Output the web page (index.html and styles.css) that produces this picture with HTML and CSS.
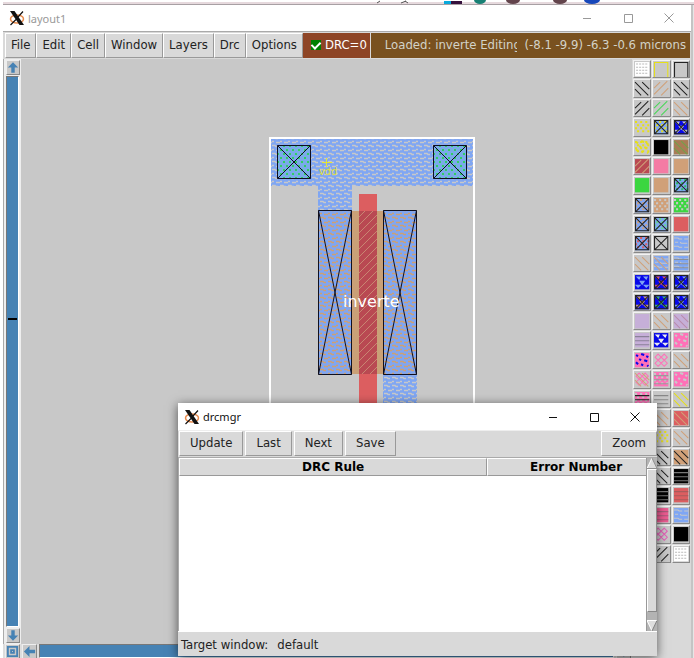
FILE: index.html
```html
<!DOCTYPE html>
<html lang="en">
<head>
<meta charset="utf-8">
<title>layout1</title>
<link rel="stylesheet" href="styles.css">
</head>
<body>
<svg class="defs" aria-hidden="true">
  <defs>
    <pattern id="wave" width="8" height="8" patternUnits="userSpaceOnUse"><path d="M0 1.500h3l1 1h2M4 6.500h4M0 5.500h2" stroke="#c8c8c8" stroke-width="1.300" fill="none"/></pattern>
    <pattern id="waveTan" width="8" height="8" patternUnits="userSpaceOnUse"><path d="M0 1.500h3l1 1h2M4 6.500h4M0 5.500h2" stroke="#cfa070" stroke-width="1.300" fill="none"/></pattern>
    <pattern id="contact" width="6" height="8" patternUnits="userSpaceOnUse"><path d="M1 2h2M4 6h2" stroke="#2fcf62" stroke-width="2"/></pattern>
    <pattern id="gate" width="8" height="8" patternUnits="userSpaceOnUse"><path d="M-1 9L9 -1M-1 1L1 -1M7 9L9 7" stroke="#c98672" fill="none"/></pattern>
    <symbol id="xlogo" viewBox="0 0 16 16">
      <ellipse cx="8" cy="9" rx="6.500" ry="4" fill="none" stroke="#e88a4c" stroke-width="1.500"/>
      <path d="M14 1.500L9 7M7 9.500L1.500 15" stroke="#111" stroke-width="1.200"/>
      <path d="M1 1h4.500L15 15h-4.500z" fill="#111"/>
    </symbol>
    <symbol id="arrow" viewBox="0 0 14 14"><path d="M7 1L13 7H9V13H5V7H1z" fill="#4682b4"/></symbol>
  </defs>
</svg>
<div class="desktop">
  <div class="behind" aria-hidden="true">
    <svg width="350" height="4"><path d="M33 3l3-2M57 3l5-2M61 1l3 2" stroke="#555"/><path d="M100 1h7v3h-7z" fill="#08a9dc"/><path d="M107 1h11v3h-11z" fill="#36103c"/><ellipse cx="136" cy="0" rx="6" ry="4" fill="#188074"/><ellipse cx="169" cy="0" rx="7" ry="4" fill="#63444c"/><ellipse cx="216" cy="0" rx="7" ry="4" fill="#63444c"/><ellipse cx="248" cy="0" rx="8" ry="4" fill="#1747ba"/></svg>
  </div>
  <section class="window main-window">
    <header class="titlebar inactive">
      <svg class="logo"><use href="#xlogo"/></svg><span class="title">layout1</span>
      <button class="caption" aria-label="Minimize"><svg viewBox="0 0 10 10"><path d="M1 5.500h8"/></svg></button>
      <button class="caption" aria-label="Maximize"><svg viewBox="0 0 10 10"><path d="M1.500 1.500h8v8h-8z"/></svg></button>
      <button class="caption" aria-label="Close"><svg viewBox="0 0 10 10"><path d="M.5.5l9 9M9.500.5l-9 9"/></svg></button>
    </header>
    <nav class="menubar">
      <button>File</button><button>Edit</button><button>Cell</button><button>Window</button><button>Layers</button><button>Drc</button><button>Options</button>
      <label class="drc"><input type="checkbox" checked>DRC=0</label>
      <div class="message"><span class="loaded">Loaded: inverte Editing</span><span class="coords">(-8.1 -9.9) -6.3 -0.6 microns</span></div>
    </nav>
    <div class="workspace">
      <div class="vscroll">
        <button aria-label="Scroll up"><svg><use href="#arrow"/></svg></button>
        <div class="trough"><i></i></div>
        <button aria-label="Scroll down"><svg class="down"><use href="#arrow"/></svg></button>
      </div>
      <svg class="canvas" role="img" aria-label="inverte cell layout">
        <g transform="translate(-21 -59)">
          <path d="M271 139h202v47H352v26h-34v-26h-47zM383 374h34v60h-34z" fill="#7fa6f3"/>
          <path d="M271 139h202v47H352v26h-34v-26h-47zM383 374h34v60h-34z" fill="url(#wave)"/>
          <path d="M351 211h33v163h-33z" fill="#c9a077"/>
          <path d="M359 194h18v240h-18z" fill="#dc5e60"/>
          <path d="M359 211h18v163h-18z" fill="#b94952"/>
          <path d="M359 211h18v163h-18z" fill="url(#gate)"/>
          <path d="M318 211h33v163h-33zM384 211h33v163h-33z" fill="#7fa6f3"/>
          <path d="M318 211h33v163h-33zM384 211h33v163h-33z" fill="url(#waveTan)"/>
          <path d="M278 146h33v32h-33zM433 146h33v32h-33z" fill="#79abe8"/>
          <path d="M278 146h33v32h-33zM433 146h33v32h-33z" fill="url(#contact)"/>
          <path class="ink" d="M277.500 145.500h33v33h-33zl33 33m0-33l-33 33M433.500 145.500h33v33h-33zl33 33m0-33l-33 33M318.500 210.500h33v164h-33zl33 164m0-164l-33 164M383.500 210.500h33v164h-33zl33 164m0-164l-33 164"/>
          <path d="M270 450V138h204v312" fill="none" stroke="#fff" stroke-width="2"/>
          <path d="M322 162.500h10M326.500 158v9" stroke="#e6e632"/>
          <text class="pin" x="319" y="175">vdd</text>
          <text class="cell-name" x="343" y="307">inverte</text>
        </g>
      </svg>
      <div class="palette" id="palette"></div>
      <div class="hscroll">
        <button aria-label="Fit view"><svg viewBox="0 0 14 14"><path d="M2 2h10v10H2zM5.500 5.500h3v3h-3z" fill="none" stroke="#4682b4" stroke-width="2"/></svg></button>
        <button aria-label="Scroll left"><svg class="left"><use href="#arrow"/></svg></button>
        <div class="trough"></div>
        <button aria-label="Scroll right"><svg class="right"><use href="#arrow"/></svg></button>
      </div>
    </div>
  </section>

  <section class="window dialog">
    <header class="titlebar">
      <svg class="logo"><use href="#xlogo"/></svg><span class="title">drcmgr</span>
      <button class="caption" aria-label="Minimize"><svg viewBox="0 0 10 10"><path d="M1 5.500h8"/></svg></button>
      <button class="caption" aria-label="Maximize"><svg viewBox="0 0 10 10"><path d="M1.500 1.500h8v8h-8z"/></svg></button>
      <button class="caption" aria-label="Close"><svg viewBox="0 0 10 10"><path d="M.5.5l9 9M9.500.5l-9 9"/></svg></button>
    </header>
    <div class="toolbar"><button>Update</button><button>Last</button><button>Next</button><button>Save</button><button class="zoom">Zoom</button></div>
    <div class="list">
      <div class="rows"><table><thead><tr><th class="rule">DRC Rule</th><th>Error Number</th></tr></thead></table></div>
      <div class="listbar">
        <button aria-label="Up"><svg viewBox="0 0 10 11"><path d="M5 0L10 10.500H0z" fill="#dedede"/><path d="M0 10.500L5 0" stroke="#fff"/><path d="M5 0L10 10.500H0" fill="none" stroke="#909090"/></svg></button>
        <div class="thumb"></div>
        <button aria-label="Down"><svg viewBox="0 0 10 11"><path d="M0 .5H10L5 11z" fill="#dedede"/><path d="M10 .5H0L5 11" fill="none" stroke="#fff"/><path d="M5 11L10 .5" stroke="#808080"/></svg></button>
      </div>
    </div>
    <footer class="status"><span>Target window:</span><span>default</span></footer>
  </section>
</div>
<script src="palette.js"></script>
</body>
</html>
```
FILE: styles.css
```css
* { box-sizing: border-box; }
body { margin: 0; background: #fff; color: #222; font: 13px "DejaVu Sans Condensed", "DejaVu Sans", sans-serif; }
button { font: inherit; color: inherit; margin: 0; padding: 0; white-space: nowrap; border-radius: 0; }
svg { display: block; }
.defs { position: absolute; width: 0; height: 0; }
.desktop { position: relative; height: 100vh; display: flex; flex-direction: column; padding-left: 3px; overflow: hidden; background: linear-gradient(90deg, #fff 3px, #e6e6e6 3px); }
.behind { height: 5px; flex: none; display: flex; justify-content: flex-end; background: linear-gradient(#fff 2px, #e6d9dd 2px, #e6d9dd 4px, #a8a0a4 4px); }
.window { display: flex; flex-direction: column; }
.main-window { flex: 1; min-height: 0; margin-right: 1px; border-right: 2px solid #c4c4c4; background: #d9d9d9; }

.titlebar { display: flex; align-items: center; flex: none; height: 27px; padding: 0 2px 0 6px; background: #fff; color: #111; font: 11px "Noto Sans", sans-serif; }
.titlebar .title { flex: 1; }
.inactive { color: #999; }
.logo { width: 16px; height: 16px; margin-right: 3px; }
.caption { display: grid; place-items: center; width: 41px; height: 26px; border: 0; background: none; }
.caption svg { width: 10px; height: 10px; fill: none; stroke: currentColor; }
.main-window .titlebar { height: 26px; }

.menubar { display: flex; flex: none; height: 28px; padding: 1px 1px 1px 2px; border-top: 1px solid #aaa; background: #d9d9d9; }
.menubar button { padding: 0 5px 2px; border: 1px solid; border-color: #fff #999 #999 #fff; background: #d9d9d9; }
.drc { display: flex; align-items: center; padding: 0 3px 2px 8px; background: #8e4526; color: #fff; }
.drc input { appearance: none; flex: none; width: 10px; height: 10px; margin: 0 4px 0 0; background: #008000; display: grid; place-items: center; }
.drc input:checked::before { content: ""; width: 4px; height: 7px; margin-bottom: 2px; border: solid #fff; border-width: 0 2px 2px 0; transform: rotate(45deg); }
.message { flex: 1; min-width: 0; display: flex; align-items: center; justify-content: space-between; gap: 8px; margin-left: 1px; padding: 0 4px 2px 14px; background: #79511f; color: #d3d3c8; white-space: nowrap; }
.loaded { min-width: 0; overflow: hidden; }
.coords { flex: none; }

.workspace { flex: 1; min-height: 0; display: grid; grid-template: 1fr 14px / 18px 1fr 59px; }
.canvas { width: 100%; height: 100%; background: #c8c8c8; overflow: hidden; }
.ink { fill: none; stroke: #101020; }
.pin { fill: #dede3c; font: 11px "DejaVu Sans Condensed", sans-serif; }
.cell-name { fill: #fff; font: 16px "DejaVu Sans", sans-serif; }
.vscroll { display: flex; flex-direction: column; gap: 1px; padding: 1px 1px 1px 2px; border-left: 1px solid #aaa; background: #eee; }
.vscroll button, .hscroll button { flex: none; width: 15px; height: 15px; border: 1px solid; border-color: #eee #888 #888 #eee; background: #c8c8c8; }
.vscroll button { width: 14px; }
.vscroll button svg, .hscroll button svg { width: 13px; height: 13px; }
.vscroll button svg { width: 12px; }
.down { transform: rotate(180deg); }
.left { transform: rotate(-90deg); }
.right { transform: rotate(90deg); }
.trough { flex: 1; display: grid; align-items: center; border: 1px solid; border-color: #777 #fff #fff #777; background: #4682b4; }
.vscroll .trough { margin-right: 1px; }
.vscroll .trough i { height: 2px; margin: 0 1px; background: #000; transform: translateY(-33px); }
.hscroll { grid-column: 1 / 3; grid-row: 2; display: flex; gap: 2px; padding: 0 1px 0 2px; overflow: hidden; background: #ddd; }
.palette { grid-column: 3; grid-row: 1 / 3; display: grid; grid-template: repeat(26, 1fr) / repeat(3, 1fr); height: 505px; padding: 1px 0 0 1px; }
.palette button { min-width: 0; min-height: 0; margin: 0 1px 1px 0; border: 1px solid; border-color: #f2f2f2 #888 #888 #f2f2f2; background: #c8c8c8; overflow: hidden; }
.palette svg { width: 100%; height: 100%; }

.dialog { position: absolute; left: 178px; right: 37px; bottom: 2px; height: 253px; background: #d9d9d9; box-shadow: 0 2px 10px #0009; }
.toolbar { display: flex; gap: 2px; flex: none; height: 27px; padding: 0 0 1px 1px; border-top: 1px solid #eee; }
.toolbar button { padding: 0 10px 2px; border: 1px solid; border-color: #fff #999 #999 #fff; background: #d9d9d9; }
.toolbar .zoom { margin-left: auto; }
.list { flex: 1; min-height: 0; display: flex; border-top: 1px solid #aaa; border-left: 1px solid #aaa; }
.rows { flex: 1; background: #fff; }
table { width: 100%; table-layout: fixed; border-collapse: separate; border-spacing: 0; }
th { height: 18px; padding: 0; border: 1px solid; border-color: #fff #999 #999 #fff; background: #d9d9d9; color: #000; font: bold 12px/14px "DejaVu Sans", sans-serif; }
th:last-child { padding-left: 18px; border-right: 0; }
.rule { width: 66%; }
.listbar { display: flex; flex-direction: column; width: 11px; background: #b3b3b3; border-left: 1px solid #999; }
.listbar button { height: 11px; border: 0; background: none; }
.listbar svg { width: 10px; height: 11px; }
.thumb { flex: 1; margin-bottom: 8px; border: 1px solid; border-color: #fff #888 #888 #fff; background: #d9d9d9; }
.status { display: flex; align-items: center; gap: 9px; flex: none; height: 25px; padding: 0 3px; border-top: 1px solid #fff; }
```
FILE: palette.js
```js
const T = '#d0a078', K = '#222', B = '#7fa6f3', N = '#0808e8', P = '#ff70b8', R = '#dc5e60', G = '#3bd640', Y = '#e6e018', S = '#c8c8c8', L = '#c6afd8';

// Each swatch is a fill followed by stipple layers written as [kind, colour].
const swatches = [
  ['#fff', ['grid', '#bbb']], [S, ['frame', Y]], [S, ['frame', K]],
  [S, ['back', K]], [S, ['fwd', T]], [S, ['back', K]],
  [S, ['fwd', K]], [S, ['fwd', '#48d858']], [S, ['back', T]],
  [S, ['dots', Y]], [B, ['dots', Y], ['cross', K]], [N, ['tri', S], ['cross', K]],
  [S, ['dots', Y], ['mottle', Y]], ['#000'], ['#a97c55', ['back', '#6fa34a']],
  ['#b94952', ['fwd', T]], ['#f47ba4'], [T],
  [G], [T], [B, ['dots', '#28c060'], ['cross', K]],
  [B, ['dots', T], ['cross', K]], [T, ['dots', S]], [G, ['dots', S]],
  [B, ['dots', T], ['cross', K]], [B, ['dots', '#65d990'], ['cross', K]], [R],
  [B, ['dots', R], ['cross', K]], [S, ['cross', K]], [B, ['wave', S]],
  [S, ['back', T]], [B, ['wave', S], ['back', T]], [B, ['wave', S], ['lines', '#8a8f98']],
  [N, ['tri', B]], [N, ['tri', R], ['cross', K]], [N, ['tri', B], ['cross', K]],
  [N, ['tri', T], ['cross', K]], [N, ['tri', '#40b870'], ['cross', K]], [N, ['tri', B], ['cross', K]],
  [L], [S, ['back', T]], [L, ['back', '#b98cac']],
  [L, ['lines', '#8a8198']], [N, ['tri', '#eee']], [P, ['mottle', S]],
  [P, ['mottle', N]], [S, ['rings', P]], [S, ['back', T]],
  [S, ['rings', P], ['back', T]], [P, ['dots', S], ['lines', '#999']], [P, ['mottle', S]],
  [P, ['dots', S], ['lines', K]], [S, ['lines', '#888']], [S, ['back', Y]],
  [S], [S, ['back', T]], [R, ['back', T]],
  [S], [S, ['dots', Y]], [S, ['back', T]],
  [S], [S, ['back', K]], [T, ['back', K]],
  [S], [S, ['back', K]], ['#000', ['lines', '#777']],
  [S], ['#000', ['lines', '#777']], [R, ['lines', '#a85b5b']],
  [S], ['#ed5b91', ['lines', '#a85b7b']], [B, ['wave', S]],
  [S], [S, ['rings', '#e560b8']], ['#000'],
  [S], [S, ['fwd', K]], ['#fff', ['grid', '#bbb']]
];

const paths = {
  grid: 'M2 3h2m1 0h2m1 0h2m1 0h2M2 6h2m1 0h2m1 0h2m1 0h2M2 9h2m1 0h2m1 0h2m1 0h2M2 12h2m1 0h2m1 0h2m1 0h2',
  frame: 'M1.500 16V1.500h13V16',
  back: 'M1 9l6 6M1 2l13 13M8 2l7 7',
  fwd: 'M1 8l6-6M1 14L14 1M8 15l7-7',
  dots: 'M1 3h2m3 0h2m3 0h2M3 6h2m3 0h2m3 0h2M1 9h2m3 0h2m3 0h2M3 12h2m3 0h2m3 0h2',
  cross: 'M1.500 1.500h13v13h-13zl13 13m0-13l-13 13',
  tri: 'M3 3h3l-1 2zM10 3h3l-1 2zM6 7h4L8 10zM2 11h4l-2 2zM10 11h4l-2 2z',
  mottle: 'M2 3l2 1M7 2l3 1M12 4l2 1M5 7l2 1M10 8l3 1M2 10l2 2M7 12l2 1M13 13l1 1',
  wave: 'M1 3h4l1 1h3m2 0h4M2 7h3m2 0l1 1h6M1 11h4l1 1h3m2 0h4',
  lines: 'M1 4.500h14M1 8.500h14M1 12.500h14',
  rings: 'M5 2l3 3-3 3-3-3zM11 2l3 3-3 3-3-3zM5 8l3 3-3 3-3-3zM11 8l3 3-3 3-3-3z'
};
const widths = { dots: 2, mottle: 2 };

document.getElementById('palette').innerHTML = swatches.map(([fill, ...layers], i) => {
  const marks = layers.map(([kind, colour]) =>
    `<path d="${paths[kind]}" fill="${kind === 'tri' ? colour : 'none'}" stroke="${colour}" stroke-width="${widths[kind] || 1}"/>`).join('');
  return `<button aria-label="Layer ${i + 1}"><svg viewBox="0 0 16 16"><path d="M1 1h14v14H1z" fill="${fill}"/>${marks}</svg></button>`;
}).join('');
```
